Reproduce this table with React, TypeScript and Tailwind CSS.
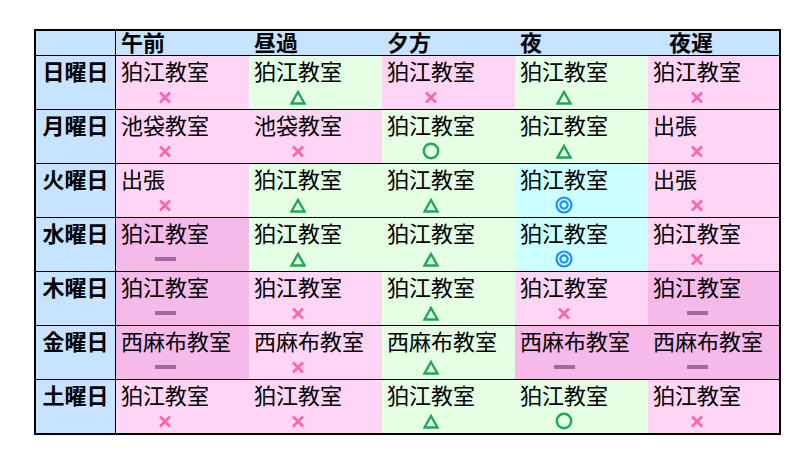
import React from "react";

type Mark = "x" | "tri" | "circle" | "double" | "dash";
type Cell = { place: string; mark: Mark };

const heads = ["午前", "昼過", "夕方", "夜", "夜遅"];

const K = "狛江教室";
const I = "池袋教室";
const N = "西麻布教室";
const S = "出張";

const rows: { day: string; cells: Cell[] }[] = [
  { day: "日曜日", cells: [{ place: K, mark: "x" }, { place: K, mark: "tri" }, { place: K, mark: "x" }, { place: K, mark: "tri" }, { place: K, mark: "x" }] },
  { day: "月曜日", cells: [{ place: I, mark: "x" }, { place: I, mark: "x" }, { place: K, mark: "circle" }, { place: K, mark: "tri" }, { place: S, mark: "x" }] },
  { day: "火曜日", cells: [{ place: S, mark: "x" }, { place: K, mark: "tri" }, { place: K, mark: "tri" }, { place: K, mark: "double" }, { place: S, mark: "x" }] },
  { day: "水曜日", cells: [{ place: K, mark: "dash" }, { place: K, mark: "tri" }, { place: K, mark: "tri" }, { place: K, mark: "double" }, { place: K, mark: "x" }] },
  { day: "木曜日", cells: [{ place: K, mark: "dash" }, { place: K, mark: "x" }, { place: K, mark: "tri" }, { place: K, mark: "x" }, { place: K, mark: "dash" }] },
  { day: "金曜日", cells: [{ place: N, mark: "dash" }, { place: N, mark: "x" }, { place: N, mark: "tri" }, { place: N, mark: "dash" }, { place: N, mark: "dash" }] },
  { day: "土曜日", cells: [{ place: K, mark: "x" }, { place: K, mark: "x" }, { place: K, mark: "tri" }, { place: K, mark: "circle" }, { place: K, mark: "x" }] },
];

const bg: Record<Mark, string> = {
  x: "bg-[#ffd5f6]",
  tri: "bg-[#e5ffe4]",
  circle: "bg-[#e5ffe4]",
  double: "bg-[#ccffff]",
  dash: "bg-[#f5b9ea]",
};

function Symbol({ mark }: { mark: Mark }) {
  if (mark === "x")
    return (
      <svg width="14" height="13" viewBox="0 0 14 13">
        <path d="M2 1.5 L12 11.5 M12 1.5 L2 11.5" stroke="#ff66b0" strokeWidth="2.8" />
      </svg>
    );
  if (mark === "tri")
    return (
      <svg width="16" height="15" viewBox="0 0 16 15">
        <path d="M8 2 L14.5 13.5 L1.5 13.5 Z" fill="none" stroke="#1fa85a" strokeWidth="2.4" strokeLinejoin="miter" />
      </svg>
    );
  if (mark === "circle")
    return (
      <svg width="18" height="18" viewBox="0 0 18 18">
        <circle cx="9" cy="9" r="7.2" fill="none" stroke="#1fa85a" strokeWidth="2.4" />
      </svg>
    );
  if (mark === "double")
    return (
      <svg width="18" height="18" viewBox="0 0 18 18">
        <circle cx="9" cy="9" r="7.5" fill="none" stroke="#1c8cff" strokeWidth="2.2" />
        <circle cx="9" cy="9" r="3.6" fill="none" stroke="#1c8cff" strokeWidth="2.2" />
      </svg>
    );
  return <div className="h-[4px] w-[21px] bg-[#a06a9e]" />;
}

export default function App() {
  return (
    <div className="h-[462px] w-[803px] bg-white pl-[34px] pt-[29px] font-['Liberation_Sans','Noto_Sans_CJK_JP',sans-serif] text-black">
      <div className="w-[747px] border-2 border-black">
        <div className="grid grid-cols-[79px_1px_133px_133px_133px_133px_131px] border-b border-black bg-[#c6e4ff]">
          <div className="h-[24px]" />
          <div className="bg-black" />
          {heads.map((h, i) => (
            <div
              key={h}
              className={`h-[24px] pt-[2px] text-[22px] font-bold leading-[22px] ${i === 4 ? "pl-[21px]" : "pl-[5px]"}`}
            >
              {h}
            </div>
          ))}
        </div>
        {rows.map((r, ri) => (
          <div
            key={r.day}
            className={`grid grid-cols-[79px_1px_133px_133px_133px_133px_131px] ${ri < rows.length - 1 ? "border-b border-black" : ""}`}
          >
            <div className="h-[53px] bg-[#c6e4ff] pt-[4px] text-center text-[22px] font-bold leading-[26px]">
              {r.day}
            </div>
            <div className="bg-black" />
            {r.cells.map((c, ci) => (
              <div key={ci} className={`flex h-[53px] flex-col ${bg[c.mark]}`}>
                <div className="pl-[5px] pt-[4px] text-[22px] leading-[26px] whitespace-nowrap">{c.place}</div>
                <div className="flex h-[22px] w-[98px] items-center justify-center">
                  <Symbol mark={c.mark} />
                </div>
              </div>
            ))}
          </div>
        ))}
      </div>
    </div>
  );
}
